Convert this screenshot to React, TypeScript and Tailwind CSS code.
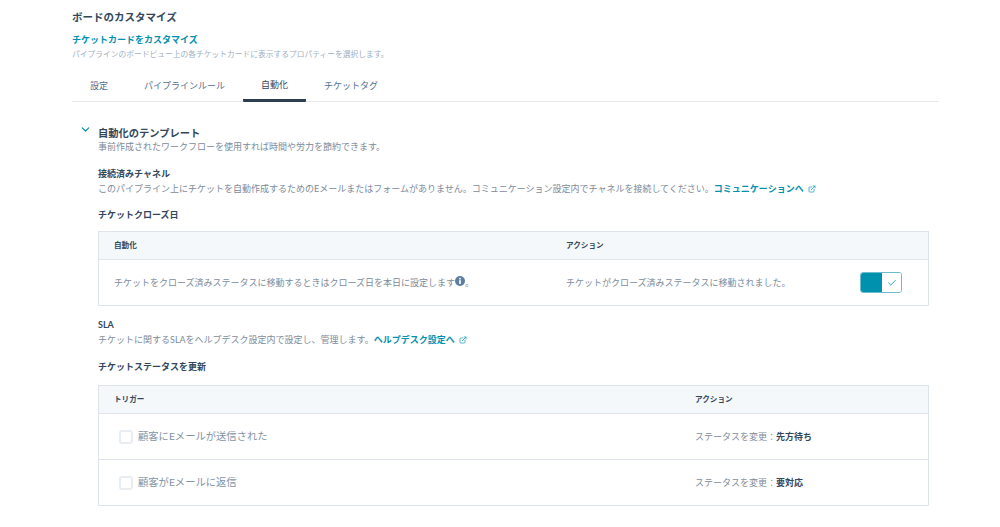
import { Check, ChevronDown, ExternalLink } from "lucide-react";

const FONT = "[font-family:'Lato','Noto_Sans_CJK_JP',sans-serif]";

const TABS = [
  { label: "設定", w: "w-[54px]" },
  { label: "パイプラインルール", w: "w-[117px]" },
  { label: "自動化", w: "w-[63px]" },
  { label: "チケットタグ", w: "w-[90px]" },
];

function Ext() {
  return <ExternalLink className="inline-block ml-[4px] -mt-[2px] w-[8px] h-[8px] text-[#0091ae]" strokeWidth={2} />;
}

function InfoDot() {
  return (
    <svg viewBox="0 0 12 12" className="w-[10px] h-[10px] -mt-[3px] shrink-0">
      <circle cx="6" cy="6" r="6" fill="#5f7d9f" />
      <rect x="5" y="5" width="2" height="4.5" fill="#fff" />
      <circle cx="6" cy="3.2" r="1.1" fill="#fff" />
    </svg>
  );
}

function Toggle() {
  return (
    <div className="flex w-[42px] h-[21px] rounded-[3px] border border-[#6bbccd] overflow-hidden">
      <div className="w-[21px] bg-[#0091ae]" />
      <div className="flex-1 bg-white flex items-center justify-center">
        <Check className="w-[10px] h-[10px] text-[#0091ae]" strokeWidth={2} />
      </div>
    </div>
  );
}

function TriggerRow({ label, action, border }: { label: string; action: string; border?: boolean }) {
  return (
    <div className={"flex items-center " + (border ? "h-[46px] border-t border-[#dfe3eb]" : "h-[45px]")}>
      <div className="w-[596px] pl-[20px] flex items-center gap-[5px]">
        <span className="w-[14px] h-[14px] rounded-[3px] border-2 border-[#e8edf2] bg-white" />
        <span className="text-[10.3px] text-[#8494a5]">{label}</span>
      </div>
      <div className="text-[9px] text-[#7c8b9b]">
        ステータスを変更：<span className="font-bold text-[#33475b]">{action}</span>
      </div>
    </div>
  );
}

export default function App() {
  return (
    <div className={"h-[527px] overflow-hidden bg-white pl-[72px] pt-[11px] " + FONT}>
      <div className="w-[867px]">
        <h1 className="text-[10.5px] leading-[12px] font-bold text-[#33475b]">ボードのカスタマイズ</h1>
        <a className="block mt-[11px] text-[9px] leading-[12px] font-bold text-[#0091ae]">チケットカードをカスタマイズ</a>
        <p className="mt-[2px] text-[7.75px] leading-[12px] text-[#9fb0c2]">
          パイプラインのボードビュー上の各チケットカードに表示するプロパティーを選択します。
        </p>

        <div className="mt-[10px] flex border-b border-[#e5e9ee] h-[32px]">
          {TABS.map((t, i) => (
            <div
              key={t.label}
              className={
                t.w +
                " flex items-center justify-center text-[9px] " +
                (i === 2
                  ? "border-b-[3px] border-[#2d3e50] rounded-b-[1px] -mb-[1px] text-[#33475b]"
                  : "text-[#516f90]")
              }
            >
              {t.label}
            </div>
          ))}
        </div>

        <div className="mt-[23px] flex">
          <ChevronDown className="ml-[7px] -mt-[2px] w-[13px] h-[13px] text-[#0091ae]" strokeWidth={2.25} />
          <div className="ml-[6px] flex-1">
            <h2 className="text-[10.25px] leading-[16px] font-bold text-[#33475b]">自動化のテンプレート</h2>
            <p className="mt-[-2px] text-[9px] leading-[16px] text-[#7c8b9b]">
              事前作成されたワークフローを使用すれば時間や労力を節約できます。
            </p>

            <h3 className="mt-[12px] text-[9px] leading-[14px] font-bold text-[#33475b]">接続済みチャネル</h3>
            <p className="text-[9px] leading-[16px] text-[#7c8b9b] whitespace-nowrap">
              このパイプライン上にチケットを自動作成するためのEメールまたはフォームがありません。コミュニケーション設定内でチャネルを接続してください。
              <a className="font-bold text-[#0091ae]">コミュニケーションへ</a>
              <Ext />
            </p>

            <h3 className="mt-[11px] text-[9px] leading-[14px] font-bold text-[#33475b]">チケットクローズ日</h3>

            <div className="mt-[9px] w-[831px] border border-[#dfe3eb]">
              <div className="flex h-[28px] items-center pt-[1px] bg-[#f5f8fa] border-b border-[#dfe3eb] text-[7.6px] font-bold text-[#33475b]">
                <div className="w-[467px] pl-[15px]">自動化</div>
                <div>アクション</div>
              </div>
              <div className="flex h-[45px] items-center text-[9px] text-[#7c8b9b]">
                <div className="w-[467px] pl-[15px] flex items-center whitespace-nowrap">
                  チケットをクローズ済みステータスに移動するときはクローズ日を本日に設定します
                  <InfoDot />。
                </div>
                <div className="w-[294px]">チケットがクローズ済みステータスに移動されました。</div>
                <Toggle />
              </div>
            </div>

            <h3 className="mt-[12px] text-[9px] leading-[14px] font-bold text-[#33475b]">SLA</h3>
            <p className="text-[9px] leading-[16px] text-[#7c8b9b]">
              チケットに関するSLAをヘルプデスク設定内で設定し、管理します。
              <a className="font-bold text-[#0091ae]">ヘルプデスク設定へ</a>
              <Ext />
            </p>

            <h3 className="mt-[12px] text-[9px] leading-[14px] font-bold text-[#33475b]">チケットステータスを更新</h3>

            <div className="mt-[11px] w-[831px] border border-[#dfe3eb]">
              <div className="flex h-[27px] items-center pt-[1px] bg-[#f5f8fa] text-[7.6px] font-bold text-[#33475b]">
                <div className="w-[596px] pl-[15px]">トリガー</div>
                <div>アクション</div>
              </div>
              <div className="border-t border-[#dfe3eb]">
                <TriggerRow label="顧客にEメールが送信された" action="先方待ち" />
                <TriggerRow label="顧客がEメールに返信" action="要対応" border />
              </div>
            </div>
          </div>
        </div>
      </div>
    </div>
  );
}
